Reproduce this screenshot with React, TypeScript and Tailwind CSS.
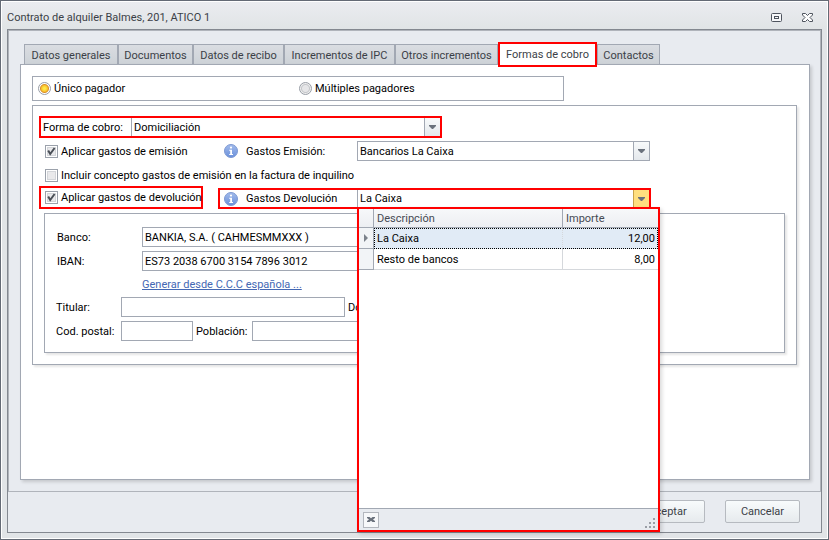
import type { ReactNode } from 'react'

const fees = [
    { name: 'La Caixa', amount: '12,00' },
    { name: 'Resto de bancos', amount: '8,00' },
]

const inputClass = 'h-5 border border-[#a2a8b3] bg-white px-0.5 text-black outline-none'

function Arrow() {
    return (
        <svg width="7" height="4" viewBox="0 0 7 4" aria-hidden="true">
            <path d="M0 0H7V1L4 4H3L0 1Z" fill="#6a717c" />
        </svg>
    )
}

function DropDown({ id, value, frame, open }: { id: string; value: string; frame: string; open?: boolean }) {
    return (
        <div className={'relative flex min-w-0 flex-1 bg-white ' + frame}>
            <select id={id} defaultValue={value} className="w-full appearance-none bg-transparent pl-0.5 pr-5 text-black outline-none">
                <option>{value}</option>
            </select>
            <span
                className={
                    'pointer-events-none absolute inset-y-0 right-0 flex w-4 items-center justify-center border-l ' +
                    (open ? 'border-[#c9a24a] bg-[#ffdf7f]' : 'border-[#a2a8b3] bg-linear-to-b from-[#f8fafb] to-[#e4e8ec]')
                }
            >
                <Arrow />
            </span>
        </div>
    )
}

function CheckBox({ label, checked }: { label: string; checked?: boolean }) {
    return (
        <label className="flex items-center gap-[3px] whitespace-nowrap">
            <span className="relative flex size-[13px]">
                <input
                    type="checkbox"
                    defaultChecked={checked}
                    className="peer size-[13px] appearance-none border border-[#9ba1ab] bg-[#e9e9eb] shadow-[inset_0_0_0_1px_#fff,inset_0_0_0_2px_#d3d5d9]"
                />
                <svg className="pointer-events-none invisible absolute inset-0 peer-checked:visible" width="13" height="13" viewBox="0 0 13 13" aria-hidden="true">
                    <path d="M3.2 5.5L5.2 9L9.6 3" fill="none" stroke="#4a4f57" strokeWidth="2" />
                </svg>
            </span>
            {label}
        </label>
    )
}

function Radio({ label, checked }: { label: string; checked?: boolean }) {
    return (
        <label className="flex items-center gap-[3px] whitespace-nowrap">
            <input
                type="radio"
                name="pagador"
                defaultChecked={checked}
                className="size-[13px] appearance-none rounded-full border border-[#989da6] bg-[radial-gradient(circle,#e6e6e8_0_3px,#c4c6ca_4px,#eee_5px)] checked:bg-[radial-gradient(circle,#ffe84a_0_1px,#f9c42e_3px,#d98f2b_4px,#fff_5px)]"
            />
            {label}
        </label>
    )
}

function InfoIcon() {
    return (
        <svg width="14" height="14" viewBox="0 0 14 14" className="shrink-0" aria-hidden="true">
            <defs>
                <linearGradient id="info" x1="0" y1="0" x2="0" y2="1">
                    <stop offset="0" stopColor="#a3bcec" />
                    <stop offset="1" stopColor="#6a90db" />
                </linearGradient>
            </defs>
            <circle cx="7" cy="7" r="6.5" fill="url(#info)" stroke="#7d99d2" />
            <circle cx="7" cy="3.6" r="1.1" fill="#fff" />
            <path d="M5.2 5.8H8V10H9V11H5.2V10H6.2V6.8H5.2Z" fill="#fff" />
        </svg>
    )
}

function FeeField({ id, label, value, frame, open }: { id: string; label: string; value: string; frame: string; open?: boolean }) {
    return (
        <>
            <InfoIcon />
            <label htmlFor={id} className="ml-2 w-[111px] shrink-0">{label}</label>
            <DropDown id={id} value={value} frame={frame} open={open} />
        </>
    )
}

function Tab({ width, children }: { width: string; children: ReactNode }) {
    return (
        <button role="tab" className={'h-5 whitespace-nowrap border border-b-0 border-[#a2a8b3] bg-linear-to-b from-[#dadde2] to-[#cdd2d7] pt-0.5 text-[#3b3f47] ' + width}>
            {children}
        </button>
    )
}

function FeePopup() {
    return (
        <div className="absolute left-[137px] top-[17px] z-10 flex h-[325px] w-[303px] flex-col border-2 border-[#f00] bg-white shadow-[2px_2px_4px_rgba(0,0,0,0.15)]">
            <table className="w-full table-fixed border-separate border-spacing-0 text-left">
                <thead>
                    <tr className="h-[19px] bg-linear-to-b from-[#f7f8fa] to-[#eceef2] text-[#454a53]">
                        <th className="w-[15px] border-b border-r border-[#a2a8b3] p-0" />
                        <th className="border-b border-r border-[#a2a8b3] px-[3px] py-0 font-normal">Descripción</th>
                        <th className="w-[95px] border-b border-[#a2a8b3] px-[3px] py-0 font-normal">Importe</th>
                    </tr>
                </thead>
                <tbody>
                    {fees.map((fee, i) => (
                        <tr key={fee.name} className="h-[21px]">
                            <td className="border-b border-r border-[#a2a8b3] bg-[#f2f4f7] p-0">
                                {i === 0 && (
                                    <svg width="4" height="8" viewBox="0 0 4 8" className="mx-auto" aria-hidden="true">
                                        <path d="M0 0L4 4L0 8Z" fill="#7b818b" />
                                    </svg>
                                )}
                            </td>
                            <td className={i === 0 ? 'border-y border-l border-r border-dotted border-black border-r-[#d5d8dc] bg-[#e1ebf6] px-0.5 py-0' : 'border-b border-r border-[#d5d8dc] px-[3px] py-0'}>
                                {fee.name}
                            </td>
                            <td className={i === 0 ? 'border-y border-r border-dotted border-black bg-[#e1ebf6] px-0.5 py-0 text-right' : 'border-b border-[#d5d8dc] px-[3px] py-0 text-right'}>
                                {fee.amount}
                            </td>
                        </tr>
                    ))}
                </tbody>
            </table>
            <div className="mt-auto flex h-[22px] items-center justify-between border-t border-[#a2a8b3] bg-[#e8ebf0] pl-1">
                <button aria-label="Cerrar lista" className="flex size-4 items-center justify-center border border-[#b3b7be] bg-[#f7f8fa]">
                    <svg width="8" height="5" viewBox="0 0 8 5" fill="#6a717c" aria-hidden="true">
                        <path d="M0 0H2.5L4 1.3L5.5 0H8V1L6 2.5L8 4V5H5.5L4 3.7L2.5 5H0V4L2 2.5L0 1Z" />
                    </svg>
                </button>
                <svg width="12" height="12" viewBox="0 0 12 12" className="mr-px self-end" fill="#9a9ea6" aria-hidden="true">
                    <path d="M8 0h2v2h-2zM8 4h2v2h-2zM4 4h2v2h-2zM8 8h2v2h-2zM4 8h2v2h-2zM0 8h2v2h-2z" />
                </svg>
            </div>
        </div>
    )
}

function BankBox() {
    return (
        <div className="mx-[5px] mt-1 flex flex-col gap-1 border border-[#a2a8b3] pb-[11px] pl-[11px] pt-[13px] shadow-[2px_2px_2px_rgba(0,0,0,0.1)]">
            <div className="flex items-center">
                <label htmlFor="banco" className="w-[86px] pl-px">Banco:</label>
                <input id="banco" className={inputClass + ' w-[400px]'} defaultValue="BANKIA, S.A. ( CAHMESMMXXX )" />
            </div>
            <div className="flex items-center">
                <label htmlFor="iban" className="w-[86px] pl-px">IBAN:</label>
                <input id="iban" className={inputClass + ' w-[400px]'} defaultValue="ES73 2038 6700 3154 7896 3012" />
            </div>
            <div className="flex h-[18px] items-center pl-[86px]">
                <a href="#ccc" className="text-[#4468b4] underline">Generar desde C.C.C española ...</a>
            </div>
            <div className="flex items-center">
                <label htmlFor="titular" className="w-[65px]">Titular:</label>
                <input id="titular" className={inputClass + ' w-56'} />
                <label htmlFor="domicilio" className="ml-[3px] w-[65px]">Domicilio:</label>
                <input id="domicilio" className={inputClass + ' w-[180px]'} />
            </div>
            <div className="flex items-center">
                <label htmlFor="postal" className="w-[65px] whitespace-nowrap">Cod. postal:</label>
                <input id="postal" className={inputClass + ' w-[72px]'} />
                <label htmlFor="poblacion" className="ml-[3px] w-14">Población:</label>
                <input id="poblacion" className={inputClass + ' w-[240px]'} />
            </div>
        </div>
    )
}

export default function App() {
    return (
        <div className="flex min-h-screen flex-col border border-[#646a75] bg-[#e1e4e7] font-['Roboto','Noto_Sans',sans-serif] text-[11px] leading-[17px] text-black">
            <div className="flex flex-1 flex-col border border-white px-[5px] pb-[5px]">
                <header className="-mx-[5px] flex h-[27px] items-center bg-linear-to-b from-[#ebecf0] to-[#e0e4e6] pl-[5px] pr-3.5 pt-1 text-[#3b3f47]">
                    <h1 className="flex-1">Contrato de alquiler Balmes, 201, ATICO 1</h1>
                    <button aria-label="Maximizar" className="mr-5">
                        <svg width="11" height="9" viewBox="0 0 11 9" fill="none" stroke="#4e545e" aria-hidden="true">
                            <rect x="0.5" y="0.5" width="10" height="8" rx="1" fill="#f6f7f9" />
                            <rect x="3.5" y="3.5" width="4" height="2" />
                        </svg>
                    </button>
                    <button aria-label="Cerrar">
                        <svg width="11" height="9" viewBox="0 0 11 9" aria-hidden="true">
                            <path d="M0.5 0.5H3.5L5.5 2.5L7.5 0.5H10.5V2L8 4.5L10.5 7V8.5H7.5L5.5 6.5L3.5 8.5H0.5V7L3 4.5L0.5 2Z" fill="#fff" stroke="#4e545e" />
                        </svg>
                    </button>
                </header>
                <main className="flex flex-1 flex-col border border-[#838890] bg-[#e8ebf0]">
                    <section className="flex flex-1 flex-col border border-[#b0b4bb] pb-[11px] pl-[11px] pr-2.5 pt-[13px]">
                        <nav role="tablist" className="flex h-5 pl-1">
                            <Tab width="w-[94px]">Datos generales</Tab>
                            <Tab width="w-[75px]">Documentos</Tab>
                            <Tab width="w-[91px]">Datos de recibo</Tab>
                            <Tab width="w-[111px]">Incrementos de IPC</Tab>
                            <Tab width="w-[103px]">Otros incrementos</Tab>
                            <button role="tab" aria-selected="true" className="relative -mt-0.5 h-[25px] w-[99px] whitespace-nowrap border-2 border-[#f00] bg-white text-[#3b3f47]">
                                Formas de cobro
                            </button>
                            <Tab width="w-[63px]">Contactos</Tab>
                        </nav>
                        <div className="flex-1 border border-[#a2a8b3] bg-white py-[11px] pl-[11px] pr-3 shadow-[2px_2px_3px_rgba(0,0,0,0.15)]">
                            <div className="flex h-[25px] max-w-[532px] items-center border border-[#a2a8b3] pl-[5px]">
                                <div className="w-[261px]">
                                    <Radio label="Único pagador" checked />
                                </div>
                                <Radio label="Múltiples pagadores" />
                            </div>
                            <div className="mt-1 border border-[#a2a8b3] px-1.5 pb-[11px] pt-2.5 shadow-[2px_2px_2px_rgba(0,0,0,0.1)]">
                                <div className="flex h-[22px] w-[403px] items-center border-2 border-[#f00] pl-0.5">
                                    <label htmlFor="forma" className="w-[88px]">Forma de cobro:</label>
                                    <DropDown id="forma" value="Domiciliación" frame="h-[18px] border-l border-[#a2a8b3]" />
                                </div>
                                <div className="mt-[3px] flex h-5 w-[611px] items-center pl-1.5">
                                    <div className="w-[179px]">
                                        <CheckBox label="Aplicar gastos de emisión" checked />
                                    </div>
                                    <FeeField id="emision" label="Gastos Emisión:" value="Bancarios La Caixa" frame="h-5 border border-[#a2a8b3]" />
                                </div>
                                <div className="mt-1 flex h-5 items-center pl-1.5">
                                    <CheckBox label="Incluir concepto gastos de emisión en la factura de inquilino" />
                                </div>
                                <div className="mt-px flex h-[23px] items-end gap-[15px]">
                                    <div className="flex h-[23px] w-[164px] items-center border-2 border-[#f00] pl-1">
                                        <CheckBox label="Aplicar gastos de devolución" checked />
                                    </div>
                                    <div className="relative flex h-[21px] w-[433px] items-center border-2 border-[#f00] pl-1">
                                        <FeeField id="devolucion" label="Gastos Devolución" value="La Caixa" frame="h-[17px] border-l border-[#a2a8b3]" open />
                                        <FeePopup />
                                    </div>
                                </div>
                                <BankBox />
                            </div>
                        </div>
                    </section>
                    <footer className="flex h-10 justify-end gap-5 pr-[21px] pt-2 text-[#3b3f47]">
                        <button className="h-[23px] w-[75px] rounded-xs border border-[#b6bac0] bg-linear-to-b from-[#f8fbfc] to-[#e6eaed]">Aceptar</button>
                        <button className="h-[23px] w-[75px] rounded-xs border border-[#b6bac0] bg-linear-to-b from-[#f8fbfc] to-[#e6eaed]">Cancelar</button>
                    </footer>
                </main>
            </div>
        </div>
    )
}
